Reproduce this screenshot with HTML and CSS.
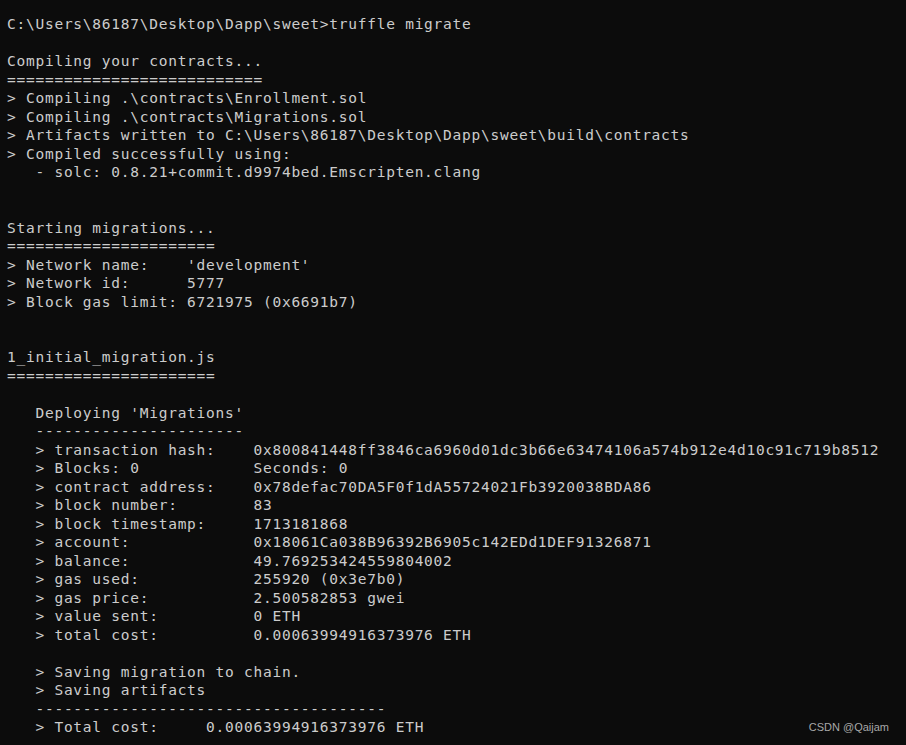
FILE: index.html
```html
<!DOCTYPE html>
<html>
<head>
<meta charset="utf-8">
<link rel="stylesheet" href="styles.css">
</head>
<body>
<main class="terminal">
<pre class="output">C:\Users\86187\Desktop\Dapp\sweet>truffle migrate

Compiling your contracts...
===========================
> Compiling .\contracts\Enrollment.sol
> Compiling .\contracts\Migrations.sol
> Artifacts written to C:\Users\86187\Desktop\Dapp\sweet\build\contracts
> Compiled successfully using:
   - solc: 0.8.21+commit.d9974bed.Emscripten.clang


Starting migrations...
======================
> Network name:    'development'
> Network id:      5777
> Block gas limit: 6721975 (0x6691b7)


1_initial_migration.js
======================

   Deploying 'Migrations'
   ----------------------
   > transaction hash:    0x800841448ff3846ca6960d01dc3b66e63474106a574b912e4d10c91c719b8512
   > Blocks: 0            Seconds: 0
   > contract address:    0x78defac70DA5F0f1dA55724021Fb3920038BDA86
   > block number:        83
   > block timestamp:     1713181868
   > account:             0x18061Ca038B96392B6905c142EDd1DEF91326871
   > balance:             49.769253424559804002
   > gas used:            255920 (0x3e7b0)
   > gas price:           2.500582853 gwei
   > value sent:          0 ETH
   > total cost:          0.00063994916373976 ETH

   > Saving migration to chain.
   > Saving artifacts
   -------------------------------------</pre>
<div class="last-row">
<pre class="output last">   > Total cost:     0.00063994916373976 ETH</pre>
<span class="watermark">CSDN @Qaijam</span>
</div>
</main>
</body>
</html>
```
FILE: styles.css
```css
html, body {
  margin: 0;
  padding: 0;
  background: #0c0c0c;
}
.terminal {
  width: 906px;
  height: 745px;
  overflow: hidden;
  background: #0c0c0c;
  padding: 15px 17px 0 7px;
  box-sizing: border-box;
}
.output {
  margin: 0;
  font-family: "DejaVu Sans Mono", "Liberation Mono", monospace;
  font-size: 14.5px;
  letter-spacing: 0.75px;
  line-height: 18.5px;
  color: #cccccc;
  white-space: pre;
}
.last-row {
  display: flex;
  align-items: center;
}
.watermark {
  margin-left: auto;
  font-family: "Liberation Sans", Arial, sans-serif;
  font-size: 11px;
  line-height: 18px;
  color: #a8a8a8;
}
```
